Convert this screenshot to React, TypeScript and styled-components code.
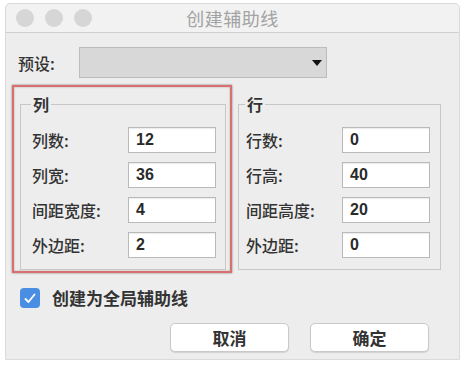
import { FC } from 'react';
import styled, { createGlobalStyle } from 'styled-components';

// ----------------------------------------------------------------------------

const GlobalStyle = createGlobalStyle`
  body {
    margin: 0;
    background: #ffffff;
    font-family: 'Noto Sans CJK SC', 'Liberation Sans', sans-serif;
    color: #333333;
  }
`;

interface FieldItem {
  label: string;
  value: string;
}

const columns: FieldItem[] = [
  { label: '列数:', value: '12' },
  { label: '列宽:', value: '36' },
  { label: '间距宽度:', value: '4' },
  { label: '外边距:', value: '2' },
];

const rows: FieldItem[] = [
  { label: '行数:', value: '0' },
  { label: '行高:', value: '40' },
  { label: '间距高度:', value: '20' },
  { label: '外边距:', value: '0' },
];

// ----------------------------------------------------------------------------

const Window = styled.div`
  margin: 3px 0 0 5px;
  width: 455px;
  height: 357px;
  box-sizing: border-box;
  background: #ededed;
  border: 1px solid #dadada;
  border-radius: 5px 5px 0 0;
  display: flex;
  flex-direction: column;
`;

const TitleBar = styled.div`
  height: 28px;
  flex-shrink: 0;
  display: grid;
  grid-template-columns: 1fr auto 1fr;
  align-items: center;
  background: #f2f2f2;
  border-bottom: 1px solid #cfcfcf;
  border-radius: 5px 5px 0 0;
`;

const Lights = styled.div`
  display: flex;
  gap: 11px;
  padding-left: 10px;
`;

const Light = styled.span`
  width: 18px;
  height: 18px;
  border-radius: 50%;
  background: #d6d6d6;
`;

const Title = styled.div`
  font-size: 18px;
  color: #a3a3a3;
  letter-spacing: 0.5px;
`;

const Body = styled.div`
  flex: 1;
  display: flex;
  flex-direction: column;
  padding-top: 14px;
`;

const PresetRow = styled.div`
  display: flex;
  align-items: center;
  padding-left: 12px;
`;

const PresetLabel = styled.span`
  width: 61px;
  font-size: 16px;
  font-weight: 500;
`;

const Select = styled.div`
  width: 248px;
  height: 31px;
  box-sizing: border-box;
  background: #d8d8d8;
  border: 1px solid #bcbcbc;
  display: flex;
  align-items: center;
  justify-content: flex-end;
  padding-right: 4px;
`;

const Arrow = styled.span`
  width: 0;
  height: 0;
  border-left: 5px solid transparent;
  border-right: 5px solid transparent;
  border-top: 6px solid #111111;
`;

const Groups = styled.div`
  display: flex;
  align-items: flex-start;
  margin-top: 7px;
`;

const Highlight = styled.div`
  margin-left: 6px;
  width: 220px;
  height: 188px;
  box-sizing: border-box;
  border: 2px solid #d9706f;
  box-shadow: 0 0 2px rgba(0, 0, 0, 0.45), inset 0 0 2px rgba(0, 0, 0, 0.3);
  padding: 6px 4px 0 6px;
`;

const Group = styled.fieldset<{ $inset: number }>`
  margin: 0;
  min-width: 0;
  border: 1px solid #c7c7c7;
  padding: 0 0 11px ${(p) => p.$inset}px;
  box-sizing: border-box;
  display: flex;
  flex-direction: column;
  gap: 9px;
`;

const RowGroup = styled(Group)`
  margin: 8px 0 0 6px;
  width: 203px;
`;

const Legend = styled.legend`
  padding: 0 2px;
  margin-left: -1px;
  font-size: 16px;
  line-height: 22px;
  font-weight: 700;
  color: #333333;
`;

const Field = styled.div`
  display: flex;
  align-items: center;
  height: 26px;
  &:first-of-type {
    margin-top: 12px;
  }
`;

const FieldLabel = styled.span`
  width: 96px;
  font-size: 16px;
  font-weight: 500;
  white-space: nowrap;
`;

const Input = styled.div`
  width: 88px;
  height: 26px;
  box-sizing: border-box;
  background: #ffffff;
  border: 1px solid #bababa;
  box-shadow: inset 0 1px 1px rgba(0, 0, 0, 0.08);
  padding-left: 7px;
  display: flex;
  align-items: center;
  font-family: 'Liberation Sans', sans-serif;
  font-size: 16px;
  font-weight: 700;
  color: #2a2a2a;
`;

const CheckRow = styled.label`
  display: flex;
  align-items: center;
  gap: 12px;
  height: 20px;
  line-height: 20px;
  margin: 15px 0 0 14px;
  font-size: 17px;
  font-weight: 700;
`;

const CheckBox = styled.span`
  width: 20px;
  height: 20px;
  border-radius: 4px;
  background: #4a8ee3;
  display: flex;
  align-items: center;
  justify-content: center;
`;

const Buttons = styled.div`
  display: flex;
  justify-content: flex-end;
  gap: 21px;
  margin: 15px 30px 0 0;
`;

const Button = styled.button`
  width: 119px;
  height: 29px;
  background: #ffffff;
  border: 1px solid #c9c9c9;
  border-radius: 5px;
  box-shadow: 0 1px 1px rgba(0, 0, 0, 0.12);
  font-family: 'Noto Sans CJK SC', sans-serif;
  font-size: 17px;
  font-weight: 700;
  color: #333333;
  padding: 0;
`;

// ----------------------------------------------------------------------------

const Fields: FC<{ items: FieldItem[] }> = ({ items }) => (
  <>
    {items.map((f) => (
      <Field key={f.label}>
        <FieldLabel>{f.label}</FieldLabel>
        <Input>{f.value}</Input>
      </Field>
    ))}
  </>
);

const App: FC = () => {
  return (
    <>
      <GlobalStyle />
      <Window>
        <TitleBar>
          <Lights>
            <Light />
            <Light />
            <Light />
          </Lights>
          <Title>创建辅助线</Title>
          <div />
        </TitleBar>
        <Body>
          <PresetRow>
            <PresetLabel>预设:</PresetLabel>
            <Select>
              <Arrow />
            </Select>
          </PresetRow>
          <Groups>
            <Highlight>
              <Group $inset={11}>
                <Legend>列</Legend>
                <Fields items={columns} />
              </Group>
            </Highlight>
            <RowGroup $inset={7}>
              <Legend>行</Legend>
              <Fields items={rows} />
            </RowGroup>
          </Groups>
          <CheckRow>
            <CheckBox>
              <svg width="12" height="11" viewBox="0 0 12 11">
                <path
                  d="M1.5 6 L4.5 9 L10.5 1.5"
                  fill="none"
                  stroke="#ffffff"
                  strokeWidth="1.8"
                  strokeLinecap="round"
                  strokeLinejoin="round"
                />
              </svg>
            </CheckBox>
            创建为全局辅助线
          </CheckRow>
          <Buttons>
            <Button>取消</Button>
            <Button>确定</Button>
          </Buttons>
        </Body>
      </Window>
    </>
  );
};

export default App;
